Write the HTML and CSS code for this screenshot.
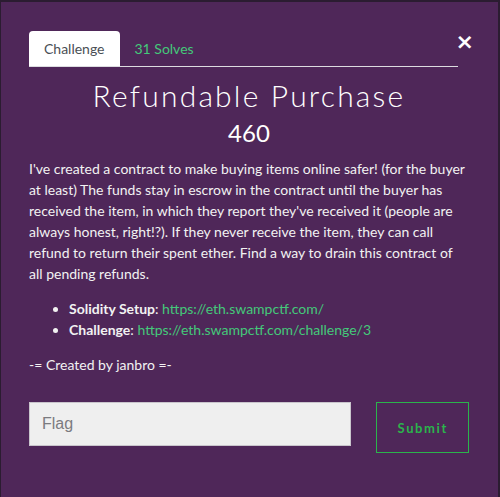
FILE: index.html
```html
<!DOCTYPE html>
<html>
<head>
<meta charset="utf-8">
<link rel="stylesheet" href="styles.css">
</head>
<body>
<div class="page">
  <div class="modal">
    <button class="close" aria-label="Close">&times;</button>
    <div class="tabs">
      <div class="tab active">Challenge</div>
      <div class="tab solves">31 Solves</div>
    </div>
    <h2 class="title">Refundable Purchase</h2>
    <h3 class="points">460</h3>
    <p class="desc">I've created a contract to make buying items online safer! (for the buyer at least) The funds stay in escrow in the contract until the buyer has received the item, in which they report they've received it (people are always honest, right!?). If they never receive the item, they can call refund to return their spent ether. Find a way to drain this contract of all pending refunds.</p>
    <ul class="links">
      <li><strong>Solidity Setup</strong>: <a href="#">https://eth.swampctf.com/</a></li>
      <li><strong>Challenge</strong>: <a href="#">https://eth.swampctf.com/challenge/3</a></li>
    </ul>
    <p class="author">-= Created by janbro =-</p>
    <div class="form">
      <input class="flag" type="text" placeholder="Flag">
      <button class="submit">Submit</button>
    </div>
  </div>
</div>
</body>
</html>
```
FILE: styles.css
```css
html, body {
  margin: 0;
  padding: 0;
  height: 100%;
  background: #2b1c31;
}
.page {
  height: 100%;
  padding-top: 2px;
  padding-left: 1px;
  box-sizing: border-box;
}
.modal {
  position: relative;
  width: 497px;
  height: 100%;
  box-sizing: border-box;
  background: #4f2759;
  padding: 29px 29px 0 28px;
  font-family: Lato, "Liberation Sans", sans-serif;
  color: #f2f2f2;
}
.close {
  position: absolute;
  top: 29px;
  right: 24px;
  background: none;
  border: 0;
  padding: 0;
  color: #fff;
  font-family: "DejaVu Sans", sans-serif;
  font-weight: bold;
  font-size: 22px;
  line-height: 22px;
  cursor: pointer;
}
.tabs {
  display: flex;
  border-bottom: 1px solid #dcdce0;
  margin-right: 11px;
}
.tab {
  padding: 9px 15px 8px;
  font-size: 14px;
  line-height: 18px;
}
.tab.active {
  background: #fff;
  color: #4a4f55;
  border-radius: 4px 4px 0 0;
}
.solves {
  color: #44c97a;
}
.title {
  margin: 8px 0 0;
  text-align: center;
  font-family: Lato, sans-serif;
  font-weight: 300;
  font-size: 30px;
  line-height: 40px;
  letter-spacing: 2.2px;
  color: #fff;
}
.points {
  margin: 3px 0 0;
  text-align: center;
  font-weight: 400;
  font-size: 24px;
  line-height: 30px;
  color: #fff;
}
.desc {
  margin: 10px 0 0;
  font-size: 14px;
  line-height: 21px;
}
.links {
  margin: 14px 0 0;
  padding-left: 40px;
  font-size: 14px;
  line-height: 21px;
}
.links strong {
  font-weight: 700;
}
.links a {
  color: #44c97a;
  text-decoration: none;
}
.author {
  margin: 14px 0 0;
  font-size: 14px;
  line-height: 21px;
}
.form {
  display: flex;
  align-items: flex-start;
  margin-top: 27px;
  gap: 25px;
}
.flag {
  width: 324px;
  height: 44px;
  box-sizing: border-box;
  background: #efefef;
  border: 1px solid #c9c5cc;
  padding: 0 12px;
  font-family: "Liberation Sans", Arial, sans-serif;
  font-size: 16px;
  color: #333;
}
.flag::placeholder {
  color: #7b7b80;
}
.submit {
  width: 93px;
  height: 51px;
  background: transparent;
  border: 1px solid #2bb44c;
  color: #2bb44c;
  font-family: Lato, sans-serif;
  font-weight: 700;
  font-size: 13px;
  letter-spacing: 1.6px;
  padding: 0;
  margin-top: 0;
}
```
